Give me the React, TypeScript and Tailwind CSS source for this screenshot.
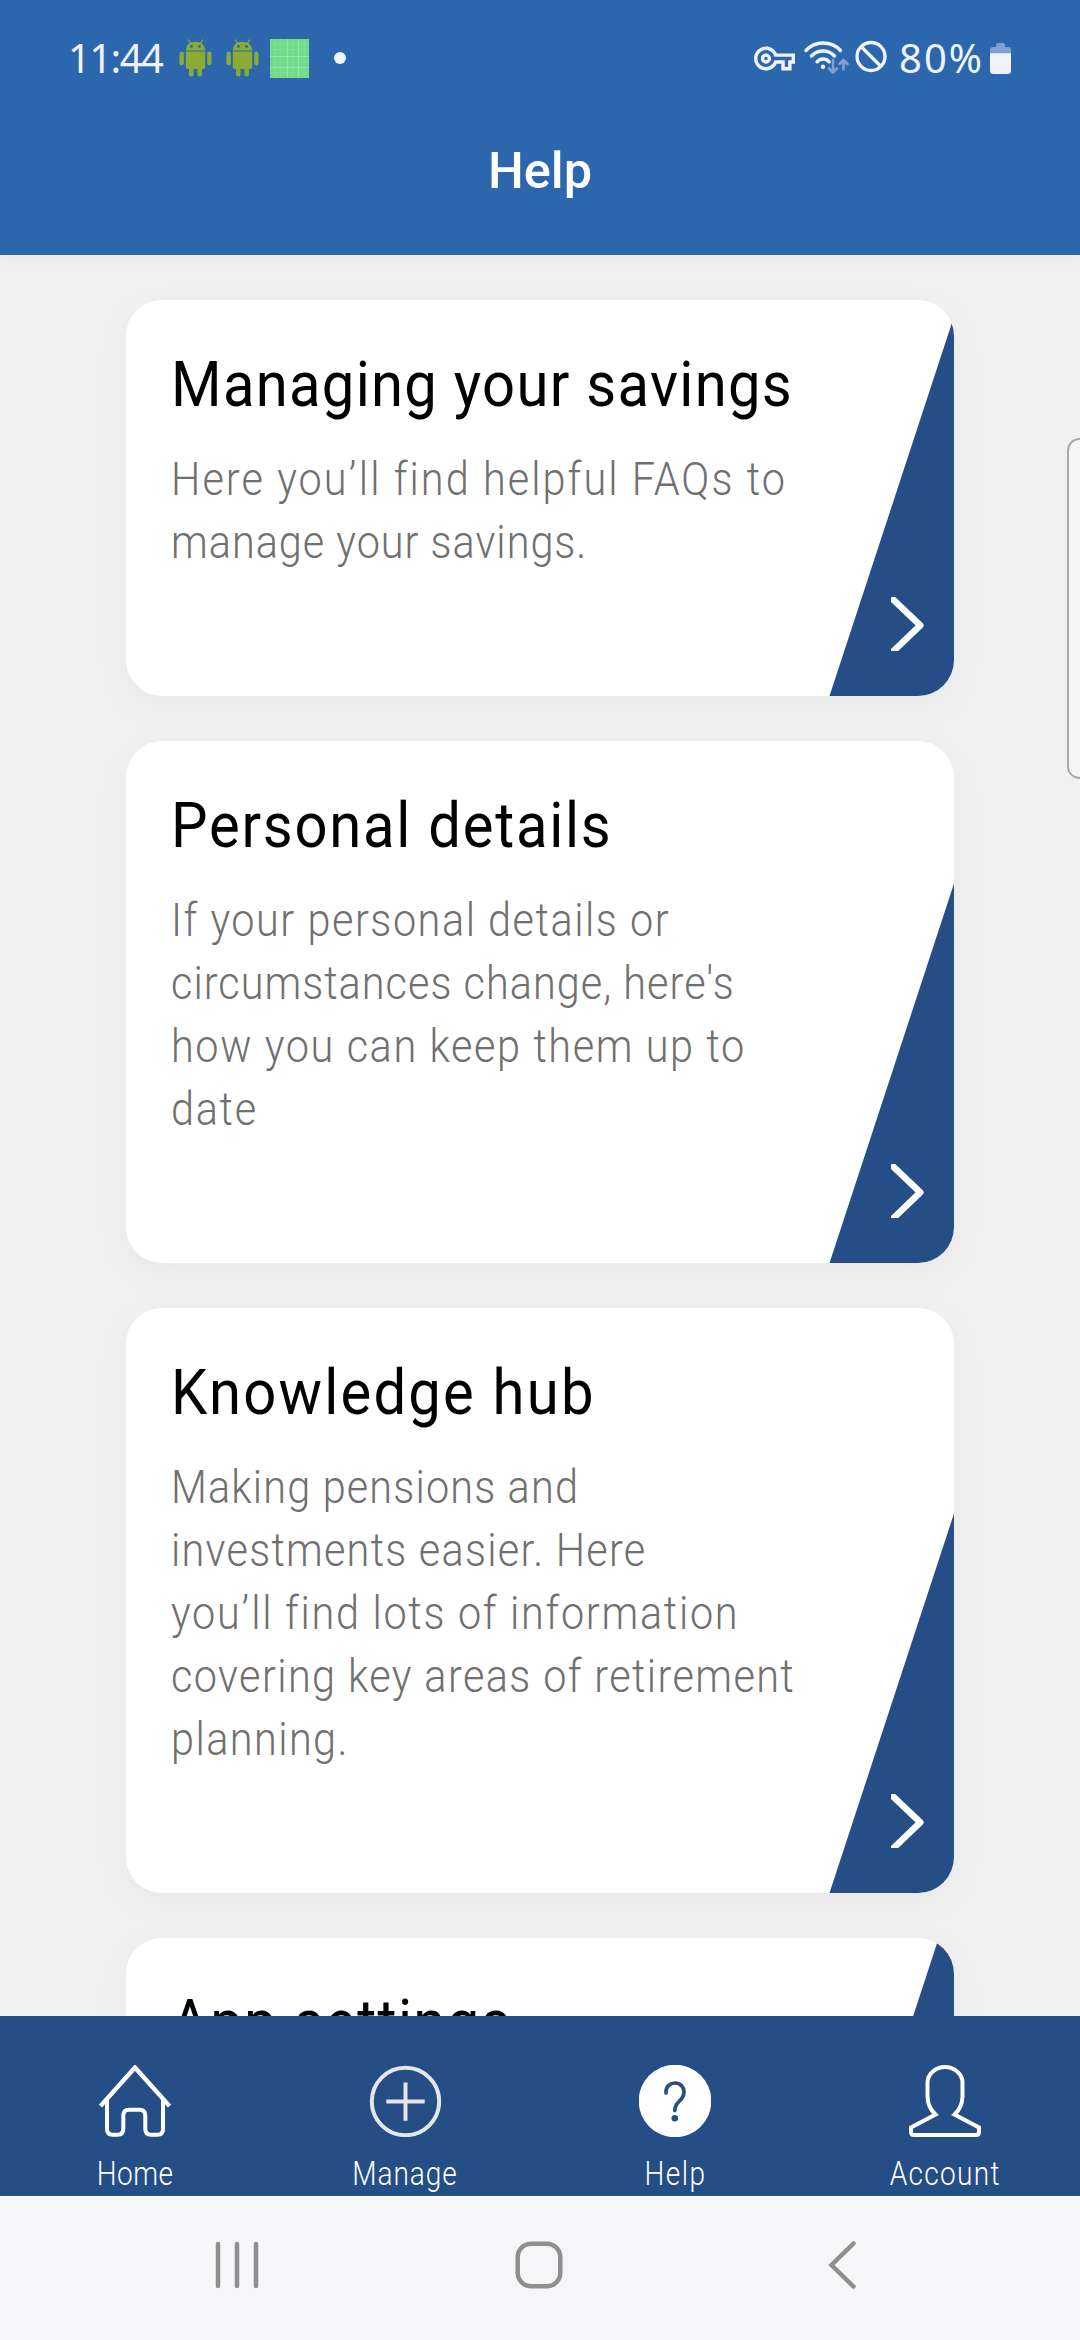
import type { ReactNode } from 'react';
import { MdOutlineVpnKey } from 'react-icons/md';

type Line = { text: string; tracking: string };

type Topic = { title: string; titleTracking: string; lines: Line[] };

const topics: Topic[] = [
  {
    title: 'Managing your savings',
    titleTracking: 'tracking-[1.4px]',
    lines: [
      { text: 'Here you’ll find helpful FAQs to', tracking: 'tracking-[2.3px]' },
      { text: 'manage your savings.', tracking: 'tracking-[1.1px]' },
    ],
  },
  {
    title: 'Personal details',
    titleTracking: 'tracking-[1.9px]',
    lines: [
      { text: 'If your personal details or', tracking: 'tracking-[1.7px]' },
      { text: "circumstances change, here's", tracking: 'tracking-[1.15px]' },
      { text: 'how you can keep them up to', tracking: 'tracking-[1.8px]' },
      { text: 'date', tracking: 'tracking-[1.9px]' },
    ],
  },
  {
    title: 'Knowledge hub',
    titleTracking: 'tracking-[2.4px]',
    lines: [
      { text: 'Making pensions and', tracking: 'tracking-[1.3px]' },
      { text: 'investments easier. Here', tracking: 'tracking-[1.4px]' },
      { text: 'you’ll find lots of information', tracking: 'tracking-[1.9px]' },
      { text: 'covering key areas of retirement', tracking: 'tracking-[1.55px]' },
      { text: 'planning.', tracking: 'tracking-[1.6px]' },
    ],
  },
  {
    title: 'App settings',
    titleTracking: 'tracking-[1.5px]',
    lines: [],
  },
];

function AndroidIcon() {
  return (
    <svg className="h-[38px] w-[33px]" viewBox="0 0 33 38" fill="#8bab36">
      <path d="M9.500 1l2 3.500M23.500 1l-2 3.500" stroke="#8bab36" strokeWidth="1.300" strokeLinecap="round" />
      <path d="M6.800 11.500C7 6 11 2.700 16.500 2.700S26 6 26.200 11.500z" />
      <circle cx="12.500" cy="7.500" r="1.400" fill="#2c67ae" />
      <circle cx="20.500" cy="7.500" r="1.400" fill="#2c67ae" />
      <path d="M6.800 12.500H26.200V28a2 2 0 0 1-2 2H8.800a2 2 0 0 1-2-2z" />
      <rect x="0.500" y="12.500" width="4.300" height="14" rx="2.150" />
      <rect x="28.200" y="12.500" width="4.300" height="14" rx="2.150" />
      <rect x="10" y="26" width="4.600" height="11.500" rx="2.300" />
      <rect x="18.400" y="26" width="4.600" height="11.500" rx="2.300" />
    </svg>
  );
}

function GridIcon() {
  return (
    <svg className="h-[39px] w-[39px]" viewBox="0 0 39 39">
      <rect width="39" height="39" fill="#73da8b" />
      <path d="M5 0V39M10.500 0V39M23 0V39M34 0V39M0 5H39M0 10.500H39M0 23H39M0 34H39" stroke="#84df98" strokeWidth="0.800" />
      <path d="M17.500 0V39M0 17.500H39M28.500 0V39M0 28.500H39" stroke="#98e7a9" strokeWidth="0.900" />
    </svg>
  );
}

function WifiIcon() {
  return (
    <svg className="h-[36px] w-[48px]" viewBox="802 40 48 36" fill="none" strokeLinecap="round" strokeLinejoin="round">
      <g stroke="#f0f3fa" strokeWidth="3.400">
        <path d="M805 50.500C809.500 45.500 815.500 43 822 43S835 45.500 839.500 50.500" />
        <path d="M810.500 56C813.500 52.700 817.500 51 822 51S830.500 52.700 833.500 56" />
        <path d="M816 61.800C817.600 60 819.600 59 822 59S826.500 60 828.200 61.800" />
      </g>
      <circle cx="822" cy="66.700" r="2.200" fill="#f0f3fa" />
      <g stroke="#7ea1d1" strokeWidth="2.600">
        <path d="M832 60V72M828 68.500L832 72.500L836 68.500" />
        <path d="M842.500 69.500V60.500M838.500 64L842.500 60L846.500 64" />
      </g>
    </svg>
  );
}

function BlockedIcon() {
  return (
    <svg className="h-[33px] w-[32px]" viewBox="0 0 32 33" fill="none" stroke="#f0f3fa" strokeWidth="3.300">
      <circle cx="16" cy="16.500" r="14" />
      <path d="M6 6.500L26 26.500" />
    </svg>
  );
}

function BatteryIcon() {
  return (
    <svg className="h-[31px] w-[21px]" viewBox="0 0 21 31">
      <path d="M6 4V2a2 2 0 0 1 2-2h5a2 2 0 0 1 2 2v2h3a3 3 0 0 1 3 3v4H0V7a3 3 0 0 1 3-3z" fill="#7ea1d1" />
      <path d="M0 10.300H21V27.500a3.500 3.500 0 0 1-3.500 3.500H3.500A3.500 3.500 0 0 1 0 27.500z" fill="#f0f3fa" />
    </svg>
  );
}

function StatusBar() {
  return (
    <div className="flex h-[116px] items-center pr-[69px] pl-[68px] font-['Noto_Sans',sans-serif] text-[40px] leading-none text-[#f0f3fa]">
      <span className="w-[111px] tracking-[-1.6px] whitespace-nowrap">11:44</span>
      <AndroidIcon />
      <div className="ml-[14px]"><AndroidIcon /></div>
      <div className="ml-[11px]"><GridIcon /></div>
      <div className="ml-[25px] size-[12px] rounded-full bg-[#f0f3fa]" />
      <MdOutlineVpnKey className="ml-auto size-[41px]" />
      <div className="ml-[8px]"><WifiIcon /></div>
      <div className="mb-[3px] ml-[4px]"><BlockedIcon /></div>
      <span className="ml-[12px] w-[91px] tracking-[2px] whitespace-nowrap">80%</span>
      <BatteryIcon />
    </div>
  );
}

function TopicCard({ topic }: { topic: Topic }) {
  return (
    <section className="relative overflow-hidden rounded-[36px] bg-white px-[45px] pt-[45px] pb-[122px]">
      <h2
        className={`origin-left scale-x-[0.92] text-[63px] leading-[79px] font-normal whitespace-nowrap text-black ${topic.titleTracking}`}
      >
        {topic.title}
      </h2>
      <div className="mt-[24px] min-h-[63px] text-[46px] leading-[63px] font-light text-[#707070]">
        {topic.lines.map((line) => (
          <p key={line.text} className={`origin-left scale-x-90 whitespace-nowrap ${line.tracking}`}>
            {line.text}
          </p>
        ))}
      </div>
      <svg className="absolute right-0 bottom-0 h-[380px] w-[125px]" viewBox="0 0 125 380">
        <path d="M0.500 380L125 0.500V380z" fill="#254d86" />
      </svg>
      <svg className="absolute right-[30px] bottom-[45px] h-[54px] w-[33px] overflow-hidden" viewBox="0 0 33 54">
        <path
          d="M2.500 2.800L29.300 28.300L2 54.500"
          fill="none"
          stroke="#fff"
          strokeWidth="6.500"
          strokeLinecap="round"
          strokeLinejoin="round"
        />
      </svg>
    </section>
  );
}

function NavItem({ label, tracking, children }: { label: string; tracking: string; children: ReactNode }) {
  return (
    <a className="flex flex-1 flex-col items-center pt-[49px]">
      <svg className="size-[72px]" viewBox="0 0 72 72" fill="none" stroke="#fff" strokeWidth="4">
        {children}
      </svg>
      <span className={`mt-[17px] scale-x-[0.85] text-[33px] leading-[39px] font-light text-white ${tracking}`}>
        {label}
      </span>
    </a>
  );
}

function TabBar() {
  return (
    <nav className="flex h-[180px] shrink-0 bg-[#254d86]">
      <NavItem label="Home" tracking="tracking-[0.5px]">
        <path d="M1.500 41L36 2.500L70.500 41" strokeWidth="4.400" />
        <path d="M8 35V64Q8 69.700 13.500 69.700H18.500Q24.300 69.700 24.300 64V50.500Q24.300 44.700 30 44.700H40.500Q46.300 44.700 46.300 50.500V64Q46.300 69.700 52 69.700H58.500Q64 69.700 64 64V35" />
      </NavItem>
      <NavItem label="Manage" tracking="tracking-[1.1px]">
        <g stroke="#e6e6e6">
          <circle cx="36.500" cy="36.500" r="33.700" />
          <path d="M17.300 36.500H55.700M36.500 17.500V55.700" />
        </g>
      </NavItem>
      <NavItem label="Help" tracking="tracking-[1.7px]">
        <circle cx="36" cy="36" r="36.300" fill="#fff" stroke="none" />
        <path
          d="M27 28V27C27 21.500 31 18 36 18C41.500 18 45 22 45 27C45 32 42.500 34 40 36.500C37 39.500 35.800 41.500 35.800 45.500"
          stroke="#254d86"
          strokeWidth="3.700"
          strokeLinecap="round"
        />
        <circle cx="35.800" cy="53.300" r="3.300" fill="#254d86" stroke="none" />
      </NavItem>
      <NavItem label="Account" tracking="tracking-[1.5px]">
        <path d="M36 2C27 2 18.500 9 18.500 17.500V31C18.500 39 21.500 45 26.500 49.500L2 62.500V67Q2 70 5 70H67Q70 70 70 67V62.500L45.500 49.500C50.500 45 53.500 39 53.500 31V17.500C53.500 9 45 2 36 2Z" />
      </NavItem>
    </nav>
  );
}

function SystemBar() {
  return (
    <div className="flex h-[144px] shrink-0 items-center border-t-2 border-[#fbfafb] bg-[#f6f6f8] pb-[8px] pl-[215px]">
      <svg className="h-[48px] w-[44px]" viewBox="0 0 44 48" stroke="#8f8f8f" strokeWidth="4.500" strokeLinecap="round">
        <path d="M3 3V45M22 3V45M41 3V45" />
      </svg>
      <svg className="ml-[256px] size-[48px]" viewBox="0 0 48 48" fill="none" stroke="#8f8f8f" strokeWidth="4.500">
        <rect x="2.700" y="2.700" width="42.600" height="42.600" rx="13.500" />
      </svg>
      <svg
        className="ml-[264px] h-[48px] w-[32px]"
        viewBox="0 0 32 48"
        fill="none"
        stroke="#8f8f8f"
        strokeWidth="4.500"
        strokeLinecap="round"
      >
        <path d="M26.500 2.500L4.500 24L26.500 45.500" />
      </svg>
    </div>
  );
}

export default function App() {
  return (
    <div className="relative flex h-[2340px] w-[1080px] flex-col overflow-hidden bg-[#f1f1f1] font-['Roboto',sans-serif]">
      <header className="z-10 h-[255px] shrink-0 bg-[#2c67ae] shadow-[0_2px_14px_rgba(0,0,0,0.05)]">
        <StatusBar />
        <h1 className="mt-[25px] text-center text-[50.5px] leading-[60px] font-medium text-white">Help</h1>
      </header>
      <main className="flex min-h-0 flex-1 flex-col gap-[45px] overflow-hidden px-[126px] pt-[45px]">
        {topics.map((topic) => (
          <div key={topic.title} className="rounded-[36px] shadow-[0_10px_36px_rgba(0,0,0,0.045)]">
            <TopicCard topic={topic} />
          </div>
        ))}
      </main>
      <TabBar />
      <SystemBar />
      <div className="absolute top-[438px] right-[-12px] h-[341px] w-[25px] rounded-[14px] border-2 border-[#a9a9a9] bg-[#f5f5f5]" />
    </div>
  );
}
